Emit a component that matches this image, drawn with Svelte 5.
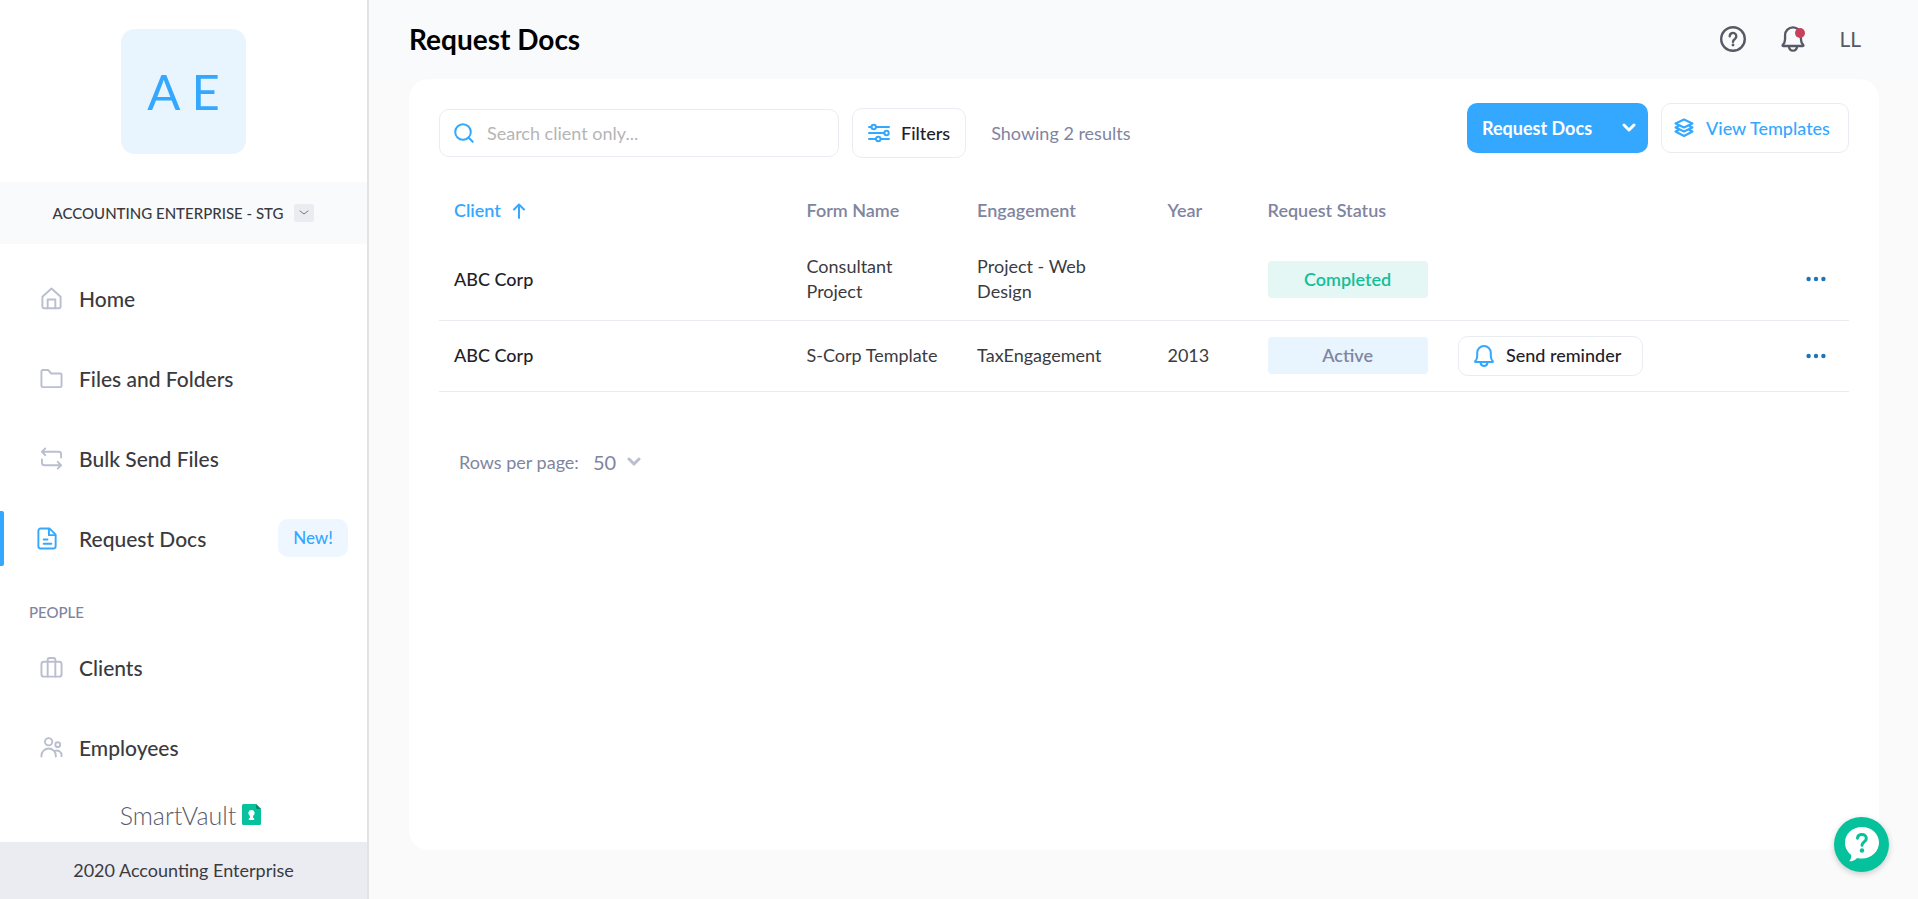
<script>
  const mainLinks = [
    { label: 'Home', icon: 'home' },
    { label: 'Files and Folders', icon: 'folder' },
    { label: 'Bulk Send Files', icon: 'repeat' },
    { label: 'Request Docs', icon: 'doc', active: true, badge: 'New!' },
  ];

  const peopleLinks = [
    { label: 'Clients', icon: 'briefcase' },
    { label: 'Employees', icon: 'people' },
  ];

  const requests = [
    { client: 'ABC Corp', form: 'Consultant Project', engagement: 'Project - Web Design', year: '', status: 'Completed' },
    { client: 'ABC Corp', form: 'S-Corp Template', engagement: 'TaxEngagement', year: '2013', status: 'Active' },
  ];

  let search = $state('');
  let rowsPerPage = $state('50');
  let ascending = $state(true);
</script>

{#snippet bell()}
  <path d="M3.500 18c-.5 0-.6-.5-.3-.8C4.600 15.800 5.200 14.300 5.200 12V8.800a6.800 6.800 0 0 1 13.600 0V12c0 2.300.6 3.800 2 5.200.3.300.2.800-.3.800z" />
  <path d="M8.500 18.500c.3 2.200 1.600 3.500 3.500 3.500s3.200-1.300 3.500-3.500" />
{/snippet}

{#snippet navLink(link)}
  <li>
    <a href="#{link.icon}" class="nav-link" class:active={link.active} aria-current={link.active ? 'page' : undefined}>
      <svg class="nav-icon" viewBox="0 0 24 24" aria-hidden="true">
        {#if link.icon === 'home'}
          <path d="M2.500 10.200 12 1.500l9.500 8.700v10.500a1.500 1.500 0 0 1-1.500 1.500H4a1.500 1.500 0 0 1-1.500-1.500z" />
          <path d="M8 22.200V13h8v9.200" />
        {:else if link.icon === 'folder'}
          <path d="M1.500 19.500V4.500A1.300 1.300 0 0 1 2.800 3.200h5c.7 0 1.200.3 1.600.8l2 2.700h9.800a1.300 1.300 0 0 1 1.300 1.300v11.500a1.500 1.500 0 0 1-1.500 1.500H3a1.500 1.500 0 0 1-1.500-1.500z" />
        {:else if link.icon === 'repeat'}
          <path d="M5.500 1.500 2 5l3.500 3.500M2.500 5h17A2.500 2.500 0 0 1 22 7.500v3.500" />
          <path d="m18.500 15.500 3.500 3.500-3.500 3.500M21.500 19h-17A2.500 2.500 0 0 1 2 16.500V13" />
        {:else if link.icon === 'doc'}
          <path d="M14 1.500H4.800A2.300 2.300 0 0 0 2.500 3.800v16.400a2.300 2.300 0 0 0 2.300 2.300h13.400a2.300 2.300 0 0 0 2.300-2.300V8z" />
          <path d="M13.500 2v6.500H20M8 13h4M8 17.500h8" />
        {:else if link.icon === 'briefcase'}
          <rect x="1.500" y="6" width="21" height="15.500" rx="2.500" />
          <path d="M8 6V4a2 2 0 0 1 2-2h4a2 2 0 0 1 2 2v2M8 6v15.500M16 6v15.500" />
        {:else}
          <circle cx="9" cy="6" r="3.800" />
          <circle cx="18.500" cy="9" r="2.500" />
          <path d="M1.500 21.500v-1a7.500 7.500 0 0 1 15 0v1M15.500 15.500a5 5 0 0 1 7 4.500v1" />
        {/if}
      </svg>
      <span>{link.label}</span>
      {#if link.badge}<span class="new-badge">{link.badge}</span>{/if}
    </a>
  </li>
{/snippet}

<div class="layout">
  <aside class="sidebar">
    <div class="avatar">A E</div>

    <div class="account">
      <span>ACCOUNTING ENTERPRISE - STG</span>
      <button class="account-toggle" aria-label="Switch account">
        <svg width="10" height="6" viewBox="0 0 10 6" aria-hidden="true"><path d="m1 1 4 3 4-3" /></svg>
      </button>
    </div>

    <nav aria-label="Main">
      <ul>
        {#each mainLinks as link}{@render navLink(link)}{/each}
      </ul>
      <h2>PEOPLE</h2>
      <ul>
        {#each peopleLinks as link}{@render navLink(link)}{/each}
      </ul>
    </nav>

    <div class="brand">
      <span>SmartVault</span>
      <svg width="19" height="21" viewBox="0 0 19 21" aria-hidden="true">
        <path fill="#05c29c" d="M1.500 0H14l5 5v14.500a1.500 1.500 0 0 1-1.500 1.500h-16A1.500 1.500 0 0 1 0 19.500v-18A1.500 1.500 0 0 1 1.500 0z" />
        <path fill="#04886e" d="M14 0v3.500A1.500 1.500 0 0 0 15.500 5H19z" />
        <path fill="#fff" d="M9.500 6a3.200 3.200 0 0 1 1.700 5.900l-.3 1.600 1.300 1v1.500H6.800v-1.500l1.300-1-.3-1.600A3.200 3.200 0 0 1 9.500 6z" />
      </svg>
    </div>
    <footer>2020 Accounting Enterprise</footer>
  </aside>

  <main>
    <header>
      <h1>Request Docs</h1>
      <div class="header-tools">
        <button class="icon-button" aria-label="Help">
          <svg width="28" height="28" viewBox="0 0 28 28" aria-hidden="true">
            <circle cx="14" cy="14" r="11.800" />
            <path d="M10.700 11.200a3.300 3.300 0 1 1 5.200 2.700c-1.200.8-1.900 1.300-1.900 2.900" />
            <circle class="dot" cx="14" cy="20" r="1.400" />
          </svg>
        </button>
        <button class="icon-button notify" aria-label="Notifications">
          <svg width="28" height="28" viewBox="0 0 24 24" aria-hidden="true">{@render bell()}</svg>
        </button>
        <button class="user">LL</button>
      </div>
    </header>

    <section class="card">
      <div class="toolbar">
        <div class="toolbar-left">
          <label class="search">
            <svg width="20" height="20" viewBox="0 0 20 20" aria-hidden="true"><circle cx="9" cy="9" r="7.800" /><path d="m14.500 14.500 4.200 4.200" /></svg>
            <input type="text" placeholder="Search client only..." aria-label="Search client only" bind:value={search} />
          </label>
          <button class="outline filters">
            <svg width="22" height="20" viewBox="0 0 22 20" aria-hidden="true">
              <path d="M1 4h2.500M8 4h13M1 10h15.500M1 16h7M13 16h8" />
              <circle cx="5.700" cy="4" r="2.200" /><circle cx="18.500" cy="10" r="2.200" /><circle cx="10.300" cy="16" r="2.200" />
            </svg>
            Filters
          </button>
          <span class="count">Showing 2 results</span>
        </div>
        <div class="toolbar-right">
          <button class="primary">
            Request Docs
            <svg width="14" height="10" viewBox="0 0 14 10" aria-hidden="true"><path d="m2 2 5 5 5-5" /></svg>
          </button>
          <button class="outline templates">
            <svg width="20" height="20" viewBox="0 0 20 20" aria-hidden="true">
              <path d="M10 1.500 1.500 5.500l8.500 4 8.500-4z" />
              <path d="m4.500 8-3 1.500 8.500 4 8.500-4-3-1.500M4.500 12l-3 1.500 8.500 4.500 8.500-4.500-3-1.500" />
            </svg>
            View Templates
          </button>
        </div>
      </div>

      <table>
        <thead>
          <tr>
            <th class="col-client" aria-sort={ascending ? 'ascending' : 'descending'}>
              <button class="sort" onclick={() => (ascending = !ascending)}>
                Client
                <svg class:flip={!ascending} width="12" height="16" viewBox="0 0 12 16" aria-hidden="true"><path d="M6 15V2M1 6.500l5-5 5 5" /></svg>
              </button>
            </th>
            <th class="col-form">Form Name</th>
            <th class="col-engagement">Engagement</th>
            <th class="col-year">Year</th>
            <th class="col-status">Request Status</th>
            <th aria-label="Reminder"></th>
            <th class="col-more" aria-label="Actions"></th>
          </tr>
        </thead>
        <tbody>
          {#each requests as request}
            <tr>
              <td class="client">{request.client}</td>
              <td>{request.form}</td>
              <td class="engagement">{request.engagement}</td>
              <td>{request.year}</td>
              <td><span class="status" class:completed={request.status === 'Completed'}>{request.status}</span></td>
              <td>
                {#if request.status === 'Active'}
                  <button class="outline reminder">
                    <svg width="24" height="24" viewBox="0 0 24 24" aria-hidden="true">{@render bell()}</svg>
                    Send reminder
                  </button>
                {/if}
              </td>
              <td class="actions">
                <button class="more" aria-label="More actions">
                  <svg width="20" height="6" viewBox="0 0 20 6" aria-hidden="true">
                    <circle cx="2.600" cy="3" r="2.200" /><circle cx="10" cy="3" r="2.200" /><circle cx="17.400" cy="3" r="2.200" />
                  </svg>
                </button>
              </td>
            </tr>
          {/each}
        </tbody>
      </table>

      <div class="pager">
        <label for="rows">Rows per page:</label>
        <div class="rows-select">
          <select id="rows" bind:value={rowsPerPage}>
            <option>10</option>
            <option>25</option>
            <option>50</option>
          </select>
          <svg width="14" height="10" viewBox="0 0 14 10" aria-hidden="true"><path d="m2 2 5 5 5-5" /></svg>
        </div>
      </div>
    </section>
  </main>

  <button class="chat" aria-label="Open help">
    <svg width="34" height="35" viewBox="0 0 34 35" aria-hidden="true">
      <path fill="#fff" d="M17 0c9.500 0 17 6.800 17 15.500S26.500 31.500 17 31.500c-1.700 0-3.300-.2-4.800-.6C10 33 7.500 34.300 4.300 34.300c1.500-2 2-3.600 1.900-6.300C2.300 25 0 20.600 0 15.500 0 6.800 7.500 0 17 0z" />
      <path class="mark" d="M12.500 11.200c.2-2.300 2-3.700 4.400-3.700 2.500 0 4.400 1.600 4.400 3.900 0 3.400-4.300 3.500-4.300 6.800" />
      <circle fill="#05c29c" cx="17" cy="23.500" r="2.200" />
    </svg>
  </button>
</div>

<style>
  :global(body) {
    background: #fafafa;
    font-family: Lato, "Open Sans", sans-serif;
    font-size: 18px;
    color: #3b3b3f;
  }

  h1, h2, ul { margin: 0; padding: 0; }

  button, input, select {
    font: inherit;
    color: inherit;
    background: none;
    border: 0;
    padding: 0;
    margin: 0;
  }

  button { cursor: pointer; }

  svg {
    flex-shrink: 0;
    fill: none;
    stroke-linecap: round;
    stroke-linejoin: round;
  }

  .layout {
    display: flex;
    min-height: 100vh;
  }

  .sidebar {
    width: 367px;
    flex-shrink: 0;
    display: flex;
    flex-direction: column;
    background: #fff;
    border-right: 2px solid #e2e2e4;
  }

  .avatar {
    width: 125px;
    height: 125px;
    margin: 29px auto 28px;
    border-radius: 14px;
    background: #e8f5ff;
    color: #34a8ff;
    font-size: 49px;
    line-height: 125px;
    text-align: center;
  }

  .account {
    display: flex;
    align-items: center;
    justify-content: center;
    gap: 11px;
    height: 62px;
    background: #f9fafc;
    font-size: 15px;
    font-weight: 500;
  }

  .account-toggle {
    display: flex;
    align-items: center;
    justify-content: center;
    width: 20px;
    height: 18px;
    border-radius: 2px;
    background: #ebecf1;
  }

  .account-toggle svg { stroke: #77787f; }

  nav { margin-top: 14px; }

  nav ul { list-style: none; }

  nav h2 {
    padding: 24px 29px 5px;
    font-size: 15px;
    line-height: 20px;
    font-weight: 500;
    color: #80859f;
  }

  .nav-link {
    position: relative;
    display: flex;
    align-items: center;
    height: 80px;
    padding: 0 19px 0 40px;
    font-size: 21px;
    font-weight: 500;
    color: inherit;
    text-decoration: none;
  }

  .nav-icon {
    width: 23px;
    height: 23px;
    margin-right: 16px;
    stroke: #babfcf;
    stroke-width: 2;
  }

  .nav-link.active { padding-left: 36px; }

  .active .nav-icon {
    margin-right: 20px;
    stroke: #34a8ff;
  }

  .nav-link.active::before {
    content: '';
    position: absolute;
    left: 0;
    top: 13px;
    width: 4px;
    height: 55px;
    border-radius: 0 2px 2px 0;
    background: #34a8ff;
  }

  .new-badge {
    width: 70px;
    margin-left: auto;
    border-radius: 10px;
    background: #eef7ff;
    color: #34a8ff;
    font-size: 17px;
    line-height: 38px;
    text-align: center;
  }

  .brand {
    flex: 1;
    display: flex;
    align-items: center;
    justify-content: center;
    gap: 6px;
    min-height: 54px;
    padding-left: 14px;
    font-size: 25px;
    font-weight: 300;
    line-height: 30px;
    color: #5a5b6c;
  }

  footer {
    background: #eaecf2;
    line-height: 57px;
    text-align: center;
  }

  main {
    flex: 1;
    min-width: 0;
    display: flex;
    flex-direction: column;
  }

  header {
    box-sizing: border-box;
    display: flex;
    align-items: center;
    justify-content: space-between;
    height: 79px;
    padding: 0 57px 2px 40px;
    background: #f9fafc;
  }

  h1 {
    font-size: 28px;
    font-weight: 700;
    line-height: 32px;
    color: #000;
  }

  .header-tools {
    display: flex;
    align-items: center;
    gap: 32px;
    color: #575965;
  }

  .icon-button {
    position: relative;
    display: flex;
    stroke: #575965;
    stroke-width: 2.4;
  }

  .icon-button .dot {
    fill: #575965;
    stroke: none;
  }

  .notify { stroke-width: 2; }

  .notify::after {
    content: '';
    position: absolute;
    top: 3px;
    right: 2px;
    width: 10px;
    height: 10px;
    border-radius: 50%;
    background: #c9405a;
  }

  .user { font-size: 21px; }

  .card {
    flex: 1;
    margin: 0 39px 49px 40px;
    padding: 24px 30px;
    border-radius: 20px;
    background: #fff;
  }

  .toolbar {
    display: flex;
    align-items: flex-start;
    justify-content: space-between;
  }

  .toolbar-left {
    display: flex;
    align-items: center;
    gap: 13px;
    padding-top: 5px;
  }

  .toolbar-right {
    display: flex;
    gap: 13px;
  }

  .search, .outline {
    box-sizing: border-box;
    display: flex;
    align-items: center;
    border: 1px solid #ebecf1;
    border-radius: 10px;
    background: #fff;
  }

  .search {
    width: 400px;
    height: 48px;
    padding: 0 14px;
    gap: 13px;
  }

  .search svg, .outline svg {
    stroke: #34a8ff;
    stroke-width: 2;
  }

  .search input {
    flex: 1;
    min-width: 0;
    outline: 0;
  }

  .search input::placeholder {
    color: #b5b5b5;
    opacity: 1;
  }

  .filters, .templates {
    height: 50px;
    padding: 0 15px;
    font-weight: 500;
  }

  .filters {
    gap: 11px;
    color: #1f2129;
  }

  .templates {
    min-width: 188px;
    padding: 0 12px;
    gap: 12px;
    color: #34a8ff;
  }

  .count {
    margin-left: 12px;
    color: #80859f;
  }

  .primary {
    display: flex;
    align-items: center;
    justify-content: space-between;
    width: 181px;
    height: 50px;
    padding: 0 12px 0 15px;
    border-radius: 10px;
    background: #34a8ff;
    color: #fff;
    font-weight: 700;
  }

  .primary svg {
    stroke: #fff;
    stroke-width: 3;
  }

  table {
    width: 100%;
    margin-top: 24px;
    table-layout: fixed;
    border-collapse: collapse;
    line-height: 25px;
  }

  th, td {
    box-sizing: border-box;
    padding: 0 15px;
    text-align: left;
  }

  th {
    height: 57px;
    font-weight: 600;
    color: #80859f;
  }

  td {
    height: 71px;
    border-bottom: 1px solid #eaebf1;
  }

  tbody tr:first-child td { height: 81px; }

  .col-client { width: 25%; }
  .col-form { width: 12.1%; }
  .col-engagement { width: 13.5%; }
  .col-year { width: 7.1%; }
  .col-status { width: 13.5%; }
  .col-more { width: 5%; }

  .engagement { padding-right: 50px; }

  .actions { padding-right: 23px; }

  .sort {
    display: flex;
    align-items: center;
    gap: 12px;
    color: #34a8ff;
  }

  .sort svg {
    stroke: #34a8ff;
    stroke-width: 2;
  }

  .sort .flip { transform: rotate(180deg); }

  .client {
    font-weight: 500;
    color: #1f2129;
  }

  .status {
    display: block;
    width: 160px;
    border-radius: 4px;
    background: #e8f5ff;
    color: #80859f;
    font-weight: 600;
    line-height: 37px;
    text-align: center;
  }

  .status.completed {
    background: #e4f7f4;
    color: #12bf98;
  }

  .reminder {
    min-width: 185px;
    height: 40px;
    padding: 0 13px;
    gap: 10px;
    color: #1f2129;
    font-weight: 500;
    white-space: nowrap;
  }

  .more {
    display: flex;
    margin-left: auto;
    padding: 8px 0;
  }

  .more svg { fill: #1c75b8; }

  .pager {
    display: flex;
    align-items: center;
    gap: 14px;
    margin-top: 55px;
    padding-left: 20px;
    color: #80859f;
  }

  .rows-select {
    position: relative;
    display: flex;
    align-items: center;
  }

  .rows-select select {
    appearance: none;
    padding-right: 24px;
    font-size: 20px;
    line-height: 30px;
    cursor: pointer;
  }

  .rows-select svg {
    position: absolute;
    right: 0;
    stroke: #babfcf;
    stroke-width: 3;
    pointer-events: none;
  }

  .chat {
    position: fixed;
    right: 29px;
    bottom: 27px;
    display: flex;
    align-items: center;
    justify-content: center;
    width: 55px;
    height: 55px;
    border-radius: 50%;
    background: #05c29c;
    box-shadow: 0 2px 6px rgba(0, 0, 0, 0.2);
  }

  .chat .mark {
    stroke: #05c29c;
    stroke-width: 3;
  }
</style>
